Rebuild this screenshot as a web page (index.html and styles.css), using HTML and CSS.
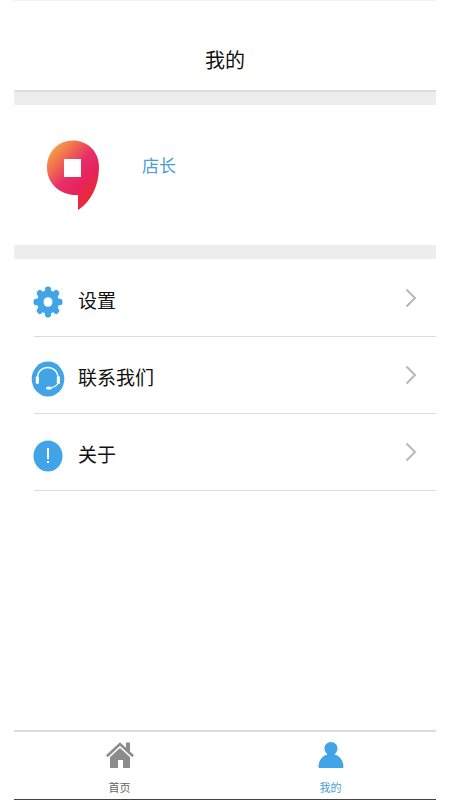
FILE: index.html
```html
<!DOCTYPE html>
<html lang="zh-CN">
<head>
<meta charset="utf-8">
<meta name="viewport" content="width=device-width, initial-scale=1">
<title>我的</title>
<link rel="stylesheet" href="styles.css">
</head>
<body>
<div class="app">
  <header class="header"><h1 class="title">我的</h1></header>
  <main class="main">
    <section class="profile">
      <svg class="avatar" viewBox="0 0 54 72" aria-hidden="true">
        <defs>
          <linearGradient id="pin" x1="0.1" y1="0.1" x2="0.75" y2="0.9">
            <stop offset="0" stop-color="#f3a446"/>
            <stop offset="0.25" stop-color="#f06a50"/>
            <stop offset="0.5" stop-color="#e62f6a"/>
            <stop offset="0.75" stop-color="#e8235a"/>
            <stop offset="1" stop-color="#e92a35"/>
          </linearGradient>
        </defs>
        <path fill="url(#pin)" d="M27 1.500C41 1.500 53 12 53 28C53 47 45 62 33 70.500Q32 71 32 70V56C15 57 1 45 1 28.500C1 13 12 1.500 27 1.500Z"/>
        <path fill="#fff" d="M18 20h17v18H18z"/>
      </svg>
      <p class="name">店长</p>
    </section>
    <ul class="list">
      <li><a class="row" href="#settings">
        <svg class="icon" viewBox="0 0 34 36" aria-hidden="true">
          <g fill="#40a4e6" transform="translate(17 18) scale(1 1.070)">
            <circle r="11"/>
            <rect x="-3" y="-14.500" width="6" height="29" rx="2.500"/>
            <rect x="-3" y="-14.500" width="6" height="29" rx="2.500" transform="rotate(45)"/>
            <rect x="-3" y="-14.500" width="6" height="29" rx="2.500" transform="rotate(90)"/>
            <rect x="-3" y="-14.500" width="6" height="29" rx="2.500" transform="rotate(135)"/>
            <circle r="4.500" fill="#fff"/>
          </g>
        </svg>
        <span class="label">设置</span>
        <svg class="chevron" viewBox="0 0 12 20" aria-hidden="true"><path d="M1.500 1.500L10 10L1.500 18.500"/></svg>
      </a></li>
      <li><a class="row" href="#contact">
        <svg class="icon" viewBox="0 0 34 36" aria-hidden="true">
          <ellipse cx="17" cy="18" rx="16.300" ry="17.500" fill="#40a4e6"/>
          <path fill="none" stroke="#fff" stroke-width="1.400" d="M6.500 17C6.500 3 27 3 27 17"/>
          <rect x="4.800" y="15" width="3.200" height="8" rx="1.600" fill="#fff"/>
          <rect x="25.800" y="15" width="3.200" height="8" rx="1.600" fill="#fff"/>
          <path fill="none" stroke="#fff" stroke-width="1.200" d="M27.200 22Q25 26 19 27"/>
          <ellipse cx="18" cy="27" rx="3" ry="1.600" fill="#fff"/>
        </svg>
        <span class="label">联系我们</span>
        <svg class="chevron" viewBox="0 0 12 20" aria-hidden="true"><path d="M1.500 1.500L10 10L1.500 18.500"/></svg>
      </a></li>
      <li><a class="row" href="#about">
        <svg class="icon" viewBox="0 0 34 36" aria-hidden="true">
          <ellipse cx="17" cy="18" rx="14.500" ry="15.500" fill="#40a4e6"/>
          <path fill="#fff" d="M16 10h2v11h-2zM16 23h2v2h-2z"/>
        </svg>
        <span class="label">关于</span>
        <svg class="chevron" viewBox="0 0 12 20" aria-hidden="true"><path d="M1.500 1.500L10 10L1.500 18.500"/></svg>
      </a></li>
    </ul>
  </main>
  <nav class="tabs">
    <a class="tab" href="#home">
      <svg class="tab-icon" viewBox="0 0 28 28" aria-hidden="true">
        <path fill="#8c8c8c" d="M4 16L14 7L24 16V27H17V19H12V27H4ZM20 1.500H24V12L20 8Z"/>
        <path fill="none" stroke="#fff" stroke-width="1" d="M2.500 16.800L14 6L25.500 16.800"/>
        <path fill="none" stroke="#8c8c8c" stroke-width="2.600" stroke-linecap="round" d="M1.700 14.500L14 3L26.300 14.500"/>
      </svg>
      <span>首页</span>
    </a>
    <a class="tab tab-active" href="#me" aria-current="page">
      <svg class="tab-icon" viewBox="0 0 28 28" aria-hidden="true">
        <path fill="#40a4e6" d="M14 1C18 1 20.500 4 20.500 7.500C20.500 10 19 12 17.500 13.500C23 15 26.500 20 26.500 26Q26.500 27 25.500 27H2.500Q1.500 27 1.500 26C1.500 20 5 15 10.500 13.500C9 12 7.500 10 7.500 7.500C7.500 4 10 1 14 1Z"/>
      </svg>
      <span>我的</span>
    </a>
  </nav>
</div>
</body>
</html>
```
FILE: styles.css
```css
* {
  box-sizing: border-box;
}

body {
  margin: 0;
  background: #fff;
  color: #111;
  font-family: "Noto Sans CJK SC", sans-serif;
}

a {
  color: inherit;
  text-decoration: none;
}

.app {
  display: flex;
  flex-direction: column;
  min-height: 100vh;
  margin: 0 14px;
  border-top: 1px solid #f0f0f0;
  border-bottom: 1px solid #444;
}

.header {
  padding: 43px 0 15px;
  border-bottom: 2px solid #dcdcdc;
  text-align: center;
}

.title {
  margin: 0;
  font-size: 20px;
  font-weight: 400;
  line-height: 31px;
}

.main {
  flex: 1;
}

.profile {
  display: flex;
  align-items: flex-start;
  gap: 42px;
  padding: 34px 32px;
  border-top: 13px solid #ededed;
  border-bottom: 14px solid #ededed;
}

.avatar {
  width: 54px;
  height: 72px;
}

.name {
  margin: 14px 0 0;
  color: #4a9fd0;
  font-size: 17px;
  line-height: 24px;
}

.list {
  margin: 0;
  padding: 1px 0 0 20px;
  list-style: none;
}

.row {
  display: flex;
  align-items: center;
  height: 77px;
  padding-right: 19px;
  border-bottom: 1px solid #dcdcdc;
}

.icon {
  width: 34px;
  height: 36px;
  margin: 8px 13px 0 -3px;
}

.label {
  flex: 1;
  padding-top: 4px;
  font-size: 19px;
  line-height: 28px;
}

.chevron {
  width: 12px;
  height: 20px;
  fill: none;
  stroke: #b8b8b8;
  stroke-width: 2;
}

.tabs {
  display: flex;
  border-top: 2px solid #dcdcdc;
}

.tab {
  display: flex;
  flex: 1;
  flex-direction: column;
  align-items: center;
  gap: 9px;
  padding: 9px 0 3px;
  color: #666;
  font-size: 11px;
  line-height: 18px;
}

.tab-active {
  color: #4a9fd0;
}

.tab-icon {
  width: 28px;
  height: 28px;
}
```
